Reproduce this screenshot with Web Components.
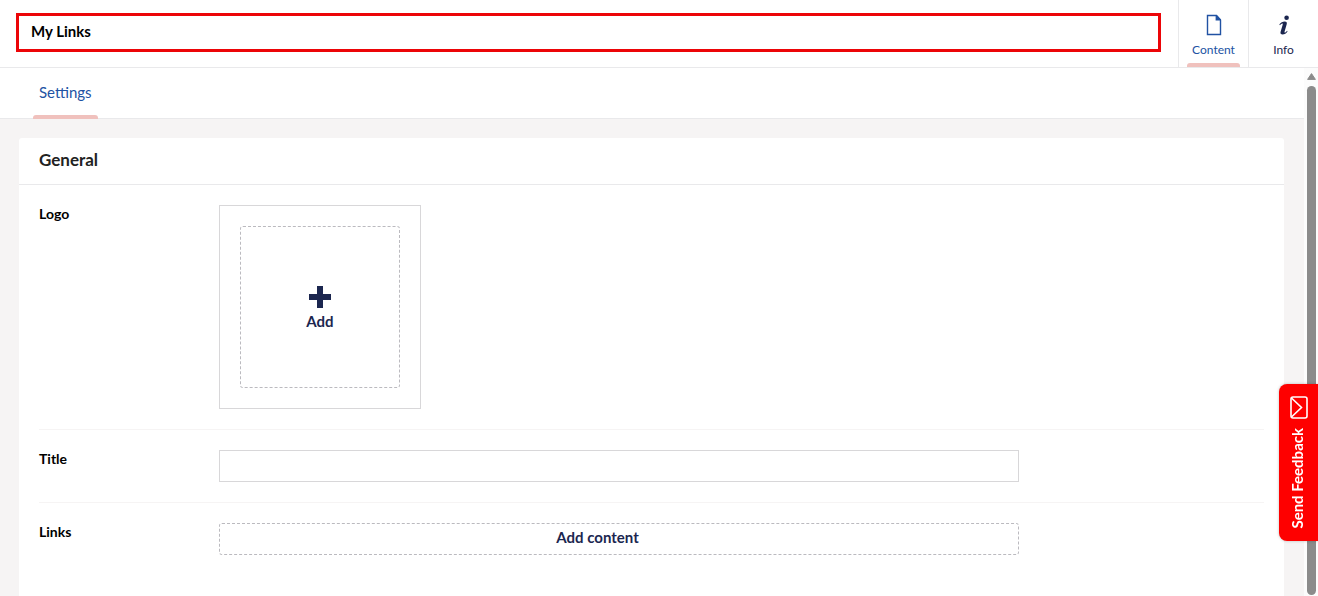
<!DOCTYPE html>
<html lang="en">
<head>
<meta charset="utf-8">
<title>My Links</title>
<style>
    html, body {
        height: 100%;
    }

    body {
        margin: 0;
        overflow: hidden;
        font-family: Lato, "Liberation Sans", sans-serif;
        font-size: 15px;
        line-height: 20px;
        color: #000;
        background: #f6f4f4;
    }
</style>
</head>
<body>
<content-editor>
    <editor-header slot="header" name="My Links">
        <content-app label="Content" active>
            <svg width="24" height="24" viewBox="0 0 24 24" aria-hidden="true">
                <path d="M5.5 2.5h9l4 4.5v14.5h-13z" fill="none" stroke="#2152a3" stroke-width="1.4"/>
                <path d="M13.6 2V7.6h5.4V6.4L14.6 2z" fill="#2152a3"/>
            </svg>
        </content-app>
        <content-app label="Info">
            <svg width="24" height="24" viewBox="0 0 24 24" aria-hidden="true">
                <circle cx="14.6" cy="4.7" r="2.3" fill="#1b264f"/>
                <path d="M7.3 11.6C8.7 9.6 10.7 8.5 12.8 8.5c1.9 0 2.4 1.1 1.9 2.8l-2.1 7.1c-.3 1-.1 1.2.3 1.2.7 0 1.4-.9 2.1-1.8l.6.5c-1.3 2.2-3.1 3.3-5 3.3-1.8 0-2.5-1.1-2-2.8l2-6.9c.3-.9.2-1.3-.3-1.3-.7 0-1.5.8-2.3 1.6z" fill="#1b264f"/>
            </svg>
        </content-app>
    </editor-header>
    <tab-bar slot="tabs" label="Settings"></tab-bar>
    <property-group heading="General">
        <property-row label="Logo"><media-picker></media-picker></property-row>
        <property-row label="Title"><text-field label="Title"></text-field></property-row>
        <property-row label="Links"><block-list></block-list></property-row>
    </property-group>
</content-editor>
<feedback-button></feedback-button>

<script>
(function(){
/**
 * Attaches an open shadow root to an element and fills it.
 *
 * @param {HTMLElement} host the element that gets the shadow root
 * @param {String} html the styles and markup for the shadow root
 */
function render(host, html) {
    const template = document.createElement("template");
    template.innerHTML = html;
    host.attachShadow({mode: "open"});
    host.shadowRoot.appendChild(template.content.cloneNode(true));
}

/**
 * The page frame: header on top, then a scrolling body with its scroll bar.
 */
class ContentEditor extends HTMLElement {
    connectedCallback() {
        render(this, `
            <style>
                :host {
                    display: flex;
                    flex-direction: column;
                    height: 100%;
                }

                .body {
                    display: flex;
                    flex: 1;
                    min-height: 0;
                }

                .scroll {
                    flex: 1;
                    min-width: 0;
                    overflow: hidden;
                }

                .content {
                    padding: 19px 20px 20px 19px;
                }
            </style>
            <slot name="header"></slot>
            <div class="body">
                <div class="scroll">
                    <slot name="tabs"></slot>
                    <div class="content"><slot></slot></div>
                </div>
                <scroll-track></scroll-track>
            </div>
        `);
    }
}

/**
 * Vertical scroll bar with an up arrow and a long thumb.
 */
class ScrollTrack extends HTMLElement {
    connectedCallback() {
        render(this, `
            <style>
                :host {
                    display: flex;
                    flex-direction: column;
                    align-items: center;
                    gap: 6px;
                    box-sizing: border-box;
                    width: 14px;
                    padding: 5px 1px 1px 2px;
                    background: #fcfcfc;
                }

                svg {
                    display: block;
                }

                .thumb {
                    flex: 1;
                    width: 9px;
                    border-radius: 5px;
                    background: #8b8b8b;
                }
            </style>
            <svg width="9" height="7" viewBox="0 0 9 7" aria-hidden="true">
                <path d="M4.5.6 8.4 6.4H.6z" fill="#8b8b8b" stroke="#8b8b8b" stroke-linejoin="round"/>
            </svg>
            <div class="thumb"></div>
        `);
    }
}

/**
 * Top bar with the editable node name and the content apps.
 */
class EditorHeader extends HTMLElement {
    connectedCallback() {
        render(this, `
            <style>
                :host {
                    display: flex;
                    height: 67px;
                    border-bottom: 1px solid #e9e9eb;
                    background: #fff;
                }

                .name {
                    flex: 1;
                    min-width: 0;
                    padding: 13px 17px 0 16px;
                }

                input {
                    display: block;
                    box-sizing: border-box;
                    width: 100%;
                    height: 39px;
                    padding: 0 12px 4px;
                    border: 3px solid #ec0508;
                    border-radius: 0;
                    outline: none;
                    font: bold 15px/20px Lato, "Liberation Sans", sans-serif;
                    color: #000;
                    background: #fff;
                }
            </style>
            <div class="name"><input type="text" aria-label="Name"></div>
            <slot></slot>
        `);
        this.shadowRoot.querySelector("input").value = this.getAttribute("name");
    }
}

/**
 * One of the square buttons at the right of the header. The icon is slotted.
 */
class ContentApp extends HTMLElement {
    connectedCallback() {
        render(this, `
            <style>
                :host {
                    display: block;
                    width: 69px;
                    border-left: 1px solid #e9e9eb;
                    color: #1b264f;
                }

                :host([active]) {
                    color: #2152a3;
                }

                button {
                    display: flex;
                    flex-direction: column;
                    align-items: center;
                    gap: 5px;
                    width: 100%;
                    height: 100%;
                    padding: 13px 8px 0;
                    border: 0;
                    font: 12px/16px Lato, "Liberation Sans", sans-serif;
                    color: inherit;
                    background: none;
                }

                .bar {
                    width: 100%;
                    height: 4px;
                    margin-top: auto;
                    border-radius: 3px 3px 0 0;
                }

                :host([active]) .bar {
                    background: #f0c1bd;
                }
            </style>
            <button type="button">
                <slot></slot>
                <span id="label"></span>
                <span class="bar"></span>
            </button>
        `);
        this.shadowRoot.querySelector("#label").textContent = this.getAttribute("label");
    }
}

/**
 * White strip with the tab of the editor.
 */
class TabBar extends HTMLElement {
    connectedCallback() {
        render(this, `
            <style>
                :host {
                    display: flex;
                    height: 50px;
                    padding-left: 33px;
                    border-bottom: 1px solid #e9e9eb;
                    background: #fff;
                }

                button {
                    display: flex;
                    flex-direction: column;
                    height: 51px;
                    padding: 0;
                    border: 0;
                    font: 15px/20px Lato, "Liberation Sans", sans-serif;
                    color: #2152a3;
                    background: none;
                }

                #label {
                    padding: 14px 6px 0;
                }

                .bar {
                    width: 100%;
                    height: 4px;
                    margin-top: auto;
                    border-radius: 3px 3px 0 0;
                    background: #f0c1bd;
                }
            </style>
            <button type="button" role="tab" aria-selected="true">
                <span id="label"></span>
                <span class="bar"></span>
            </button>
        `);
        this.shadowRoot.querySelector("#label").textContent = this.getAttribute("label");
    }
}

/**
 * White card that groups properties under a heading.
 */
class PropertyGroup extends HTMLElement {
    connectedCallback() {
        render(this, `
            <style>
                :host {
                    display: block;
                    min-height: 480px;
                    border-radius: 3px;
                    background: #fff;
                }

                h2 {
                    margin: 0;
                    padding: 12px 20px 14px;
                    border-bottom: 1px solid #e9e9eb;
                    font-size: 17px;
                    line-height: 20px;
                    font-weight: bold;
                    color: #222;
                }

                .rows {
                    padding: 0 20px;
                }
            </style>
            <h2></h2>
            <div class="rows"><slot></slot></div>
        `);
        this.shadowRoot.querySelector("h2").textContent = this.getAttribute("heading");
    }
}

/**
 * A label on the left and the slotted property editor on the right.
 */
class PropertyRow extends HTMLElement {
    connectedCallback() {
        render(this, `
            <style>
                :host {
                    display: flex;
                    padding: 20px 0;
                    border-bottom: 1px solid #f6f4f4;
                }

                :host(:last-of-type) {
                    border-bottom: 0;
                }

                #label {
                    flex: 0 0 180px;
                    font-size: 14px;
                    line-height: 18px;
                    font-weight: bold;
                }

                .editor {
                    flex: 1;
                    max-width: 800px;
                }
            </style>
            <div id="label"></div>
            <div class="editor"><slot></slot></div>
        `);
        this.shadowRoot.querySelector("#label").textContent = this.getAttribute("label");
    }
}

/**
 * Media picker without a picked item, so only the add tile shows.
 */
class MediaPicker extends HTMLElement {
    connectedCallback() {
        render(this, `
            <style>
                :host {
                    display: block;
                    width: fit-content;
                    padding: 20px;
                    border: 1px solid #d8d7d9;
                }

                button {
                    display: flex;
                    flex-direction: column;
                    align-items: center;
                    justify-content: center;
                    gap: 3px;
                    width: 160px;
                    height: 162px;
                    padding: 3px 0 0;
                    border: 1px dashed #bbbabf;
                    border-radius: 3px;
                    font: bold 15px/20px Lato, "Liberation Sans", sans-serif;
                    color: #1b264f;
                    background: #fff;
                }
            </style>
            <button type="button">
                <svg width="22" height="22" viewBox="0 0 22 22" aria-hidden="true">
                    <path d="M8 0h6v8h8v6h-8v8H8v-8H0V8h8z" fill="#1b264f"/>
                </svg>
                <span>Add</span>
            </button>
        `);
    }
}

/**
 * Single line text box.
 */
class TextField extends HTMLElement {
    connectedCallback() {
        render(this, `
            <style>
                :host {
                    display: block;
                }

                input {
                    display: block;
                    box-sizing: border-box;
                    width: 100%;
                    height: 32px;
                    padding: 4px 6px;
                    border: 1px solid #d8d7d9;
                    border-radius: 0;
                    font: 15px/20px Lato, "Liberation Sans", sans-serif;
                    background: #fff;
                }
            </style>
            <input type="text">
        `);
        this.shadowRoot.querySelector("input").setAttribute("aria-label", this.getAttribute("label"));
    }
}

class BlockList extends HTMLElement {
    connectedCallback() {
        render(this, `
            <style>
                :host {
                    display: block;
                }

                button {
                    display: block;
                    box-sizing: border-box;
                    width: 100%;
                    height: 32px;
                    padding: 0 43px 4px 0;
                    border: 1px dashed #bbbabf;
                    border-radius: 3px;
                    font: bold 15px/20px Lato, "Liberation Sans", sans-serif;
                    color: #1b264f;
                    background: #fff;
                }
            </style>
            <button type="button">Add content</button>
        `);
    }
}

/**
 * Red tab that floats over the right edge, read from bottom to top.
 */
class FeedbackButton extends HTMLElement {
    connectedCallback() {
        render(this, `
            <style>
                :host {
                    display: block;
                    position: fixed;
                    top: 384px;
                    right: 0;
                }

                button {
                    display: flex;
                    flex-direction: column;
                    align-items: center;
                    gap: 9px;
                    width: 39px;
                    padding: 12px 0;
                    border: 0;
                    border-radius: 8px 0 0 8px;
                    font: bold 15px/20px Lato, "Liberation Sans", sans-serif;
                    color: #fff;
                    background: #fe0000;
                    box-shadow: 0 0 3px rgba(0, 0, 0, .25);
                }

                span {
                    padding-left: 4px;
                    writing-mode: vertical-rl;
                    transform: rotate(180deg);
                }
            </style>
            <button type="button">
                <svg width="18" height="23" viewBox="0 0 18 23" aria-hidden="true">
                    <rect x="1" y="1" width="16" height="21" rx="2" fill="none" stroke="#fff" stroke-width="1.6"/>
                    <path d="M1.5 2 11.5 11.5 1.5 21" fill="none" stroke="#fff" stroke-width="1.6"/>
                </svg>
                <span>Send Feedback</span>
            </button>
        `);
    }
}

customElements.define("content-editor", ContentEditor);
customElements.define("scroll-track", ScrollTrack);
customElements.define("editor-header", EditorHeader);
customElements.define("content-app", ContentApp);
customElements.define("tab-bar", TabBar);
customElements.define("property-group", PropertyGroup);
customElements.define("property-row", PropertyRow);
customElements.define("media-picker", MediaPicker);
customElements.define("text-field", TextField);
customElements.define("block-list", BlockList);
customElements.define("feedback-button", FeedbackButton);
})();
</script>
</body>
</html>
